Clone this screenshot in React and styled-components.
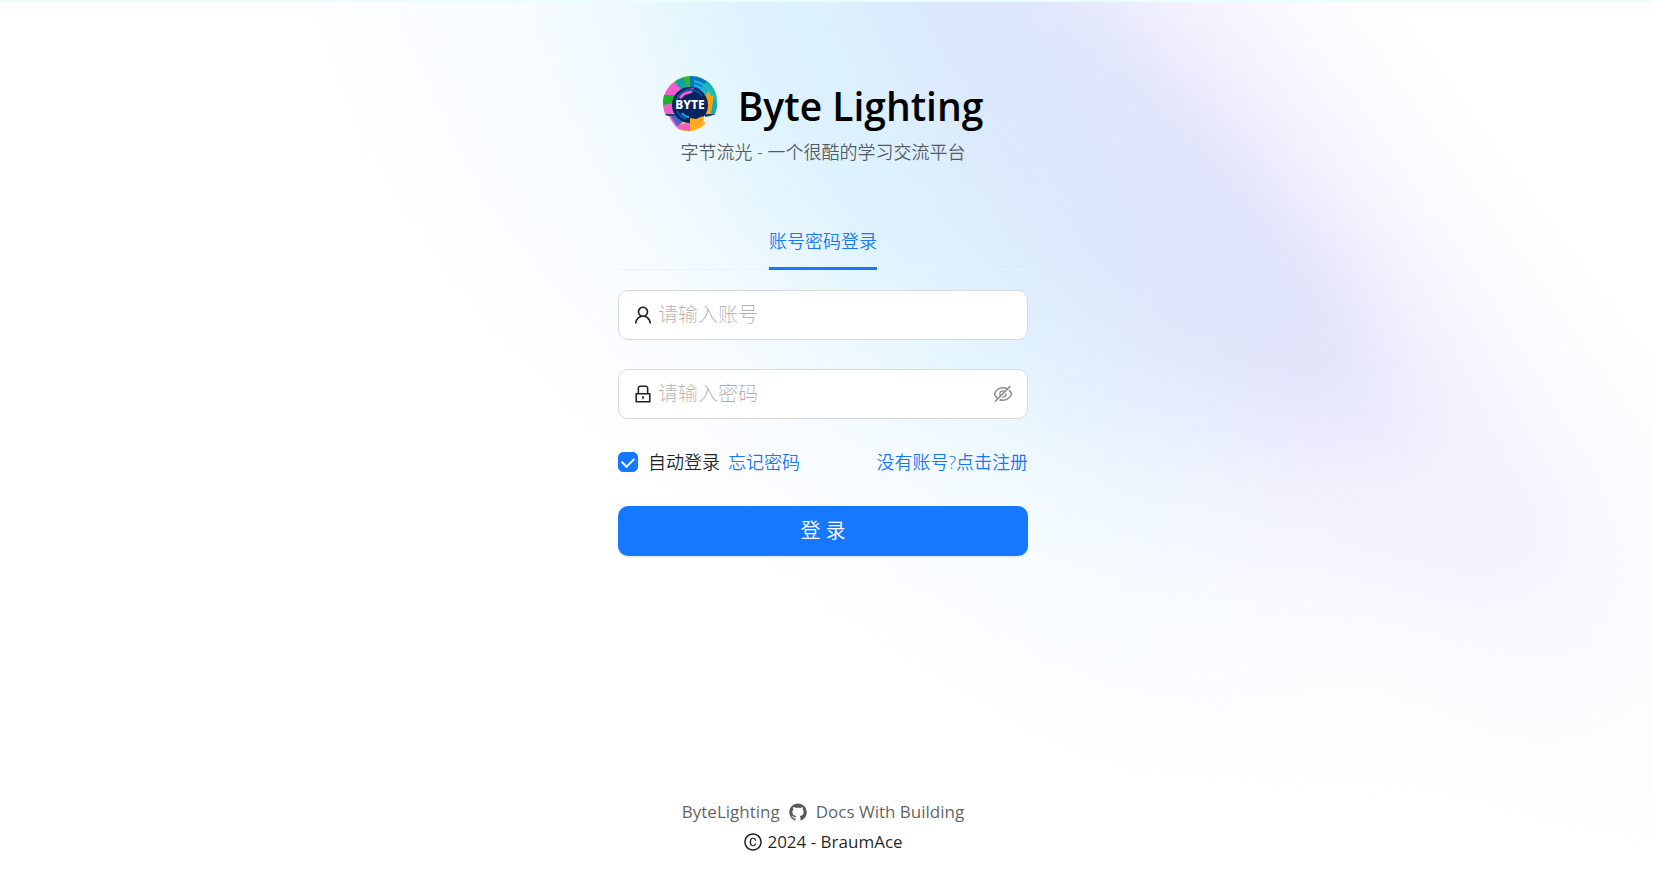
import { useState } from "react";
import styled, { createGlobalStyle } from "styled-components";
import {
  AiFillGithub,
  AiOutlineCopyright,
  AiOutlineEye,
  AiOutlineEyeInvisible,
  AiOutlineLock,
  AiOutlineUser,
} from "react-icons/ai";

const App = () => {
  const [account, setAccount] = useState("");
  const [password, setPassword] = useState("");
  const [visible, setVisible] = useState(false);

  return (
    <>
      <GlobalStyle />
      <Page>
        <Backdrop />
        <Content>
          <Header>
            <Brand>
              <Logo />
              <Title>Byte Lighting</Title>
            </Brand>
            <Desc>字节流光 - 一个很酷的学习交流平台</Desc>
          </Header>

          <Form onSubmit={(e) => e.preventDefault()}>
            <Tabs role="tablist">
              <Tab type="button" role="tab" aria-selected="true">
                账号密码登录
              </Tab>
            </Tabs>

            <Field>
              <AiOutlineUser />
              <input
                type="text"
                name="account"
                aria-label="账号"
                placeholder="请输入账号"
                value={account}
                onChange={(e) => setAccount(e.target.value)}
              />
            </Field>

            <Field>
              <AiOutlineLock />
              <input
                type={visible ? "text" : "password"}
                name="password"
                aria-label="密码"
                placeholder="请输入密码"
                value={password}
                onChange={(e) => setPassword(e.target.value)}
              />
              <EyeButton
                type="button"
                aria-label="显示密码"
                onClick={() => setVisible(!visible)}
              >
                {visible ? <AiOutlineEye /> : <AiOutlineEyeInvisible />}
              </EyeButton>
            </Field>

            <Options>
              <Remember htmlFor="autoLogin">
                <input type="checkbox" id="autoLogin" defaultChecked />
                自动登录
              </Remember>
              <TextLink href="#forget">忘记密码</TextLink>
              <TextLink href="#register" $right>
                没有账号?点击注册
              </TextLink>
            </Options>

            <Submit type="submit">登 录</Submit>
          </Form>
        </Content>

        <Footer>
          <FooterLinks>
            <a href="#home">ByteLighting</a>
            <a href="#github" aria-label="GitHub">
              <AiFillGithub />
            </a>
            <a href="#docs">Docs With Building</a>
          </FooterLinks>
          <Copyright>
            <AiOutlineCopyright />
            2024 - BraumAce
          </Copyright>
        </Footer>
      </Page>
    </>
  );
};

// nested glow layers, from the palest outer one to the core
const GLOW = [
  {
    from: "#fcfdff",
    to: "#fdfdff",
    d: "M240 -200L330 0C390 180 450 260 560 370S780 550 900 630S1090 750 1189 757S1400 750 1527 795S1700 800 1760 800V560L1653 392L1542 241L1372 0L1250 -200Z",
  },
  {
    from: "#f7fcff",
    to: "#faf9fe",
    d: "M350 -200L430 0C470 120 510 190 600 290S800 470 900 540S1090 660 1189 665S1320 630 1400 655S1500 706 1550 706S1660 640 1662 570S1600 420 1546 336L1427 168L1308 0L1190 -200Z",
  },
  {
    from: "#eff9ff",
    to: "#f3f2fe",
    d: "M490 -200L560 0C590 110 640 200 720 290S880 430 960 480S1110 550 1189 556S1310 550 1370 570S1500 610 1540 580S1570 520 1542 476S1490 370 1459 314L1348 146L1237 0L1110 -200Z",
  },
  {
    from: "#e4f6fe",
    to: "#eaeafd",
    d: "M600 -200L655 0C680 110 720 180 780 250S900 360 1000 410S1150 460 1230 460S1340 460 1380 458S1430 430 1419 404S1400 340 1368 280L1268 146L1129 0L1010 -200Z",
  },
  {
    from: "#dcf1fe",
    to: "#e3e4fb",
    d: "M670 -200L725 0C750 90 780 140 830 200S960 310 1030 345S1130 375 1200 385S1330 410 1350 385S1350 320 1320 270L1230 150L1085 0L960 -200Z",
  },
  {
    from: "#daebfd",
    to: "#dfe5fc",
    d: "M800 -200L860 0C890 70 930 130 980 180S1060 260 1120 290S1240 330 1280 335S1300 290 1270 255L1180 151L1035 0L910 -200Z",
  },
];

const Backdrop = () => (
  <BackdropSvg viewBox="0 0 1653 879" preserveAspectRatio="none" aria-hidden="true">
    <defs>
      <filter
        id="soft"
        filterUnits="userSpaceOnUse"
        x="0"
        y="-200"
        width="1800"
        height="1200"
        colorInterpolationFilters="sRGB"
      >
        <feGaussianBlur stdDeviation="26" />
      </filter>
      {GLOW.map((layer, ind) => (
        <linearGradient
          key={layer.d}
          id={`glow${ind}`}
          gradientUnits="userSpaceOnUse"
          x1="820"
          y1="0"
          x2="1070"
          y2="-112"
        >
          <stop offset="0" stopColor={layer.from} />
          <stop offset="1" stopColor={layer.to} />
        </linearGradient>
      ))}
    </defs>
    {GLOW.map((layer, ind) => (
      <path key={layer.d} d={layer.d} fill={`url(#glow${ind})`} filter="url(#soft)" />
    ))}
  </BackdropSvg>
);

const Logo = () => (
  <svg width="55" height="55" viewBox="0 0 55 55" role="img" aria-label="Byte">
    <path d="M27 0A27 27 0 0 1 47 8L38 17A16 16 0 0 0 27 11Z" fill="#0878b8" />
    <path d="M27 0A27 27 0 0 0 11 6L18 15L27 11Z" fill="#35b52b" />
    <path d="M13 5L20 2L24 10L17 15Z" fill="#0ba3a4" />
    <path d="M11 6A27 27 0 0 0 1 20L12 23L20 15Z" fill="#f35bd0" />
    <path d="M1 19A27 27 0 0 0 0 30L10 31L12 19Z" fill="#18b62c" />
    <path d="M0 29A27 27 0 0 0 3 40L13 36L11 27Z" fill="#ee60c8" />
    <path d="M44 5A27 27 0 0 1 54 23L43 27L36 15Z" fill="#13b5aa" />
    <path d="M49 13A27 27 0 0 1 54 32L44 32L42 19Z" fill="#17c99c" />
    <path d="M40 18L46 15A21 21 0 0 1 51 38L41 39Z" fill="#f6a40b" />
    <path d="M54 27A27 27 0 0 1 52 38L48 38L51 20Z" fill="#12a9c9" />
    <path d="M5 38L13 37L20 44L17 54A27 27 0 0 1 8 44Z" fill="#ed60cc" />
    <path d="M8 40L14 38L20 46L14 50Z" fill="#4565ce" />
    <path d="M17 48L28 44L38 44L43 47A24 24 0 0 1 17 54Z" fill="#ffae20" />
    <path d="M16 49L27 47L27 55L17 53Z" fill="#f75dc8" />
    <path d="M2 38H12L11 40L5 40Z" fill="#18407a" />
    <path d="M53 38H42L42 41L47 40Z" fill="#18407a" />
    <circle cx="27" cy="29" r="18" fill="#06245f" />
    <path d="M14 20L24 13L31 12L29 17L22 19L18 23Z" fill="#f35bd0" />
    <path
      d="M31 5A24 24 0 0 1 49 20M31 9A20 20 0 0 1 44 19"
      fill="none"
      stroke="#22b9e2"
      strokeWidth="2"
    />
    <path
      d="M14 24A14 14 0 0 1 39 20M14 35A15 15 0 0 0 23 43"
      fill="none"
      stroke="#0754a7"
      strokeWidth="2"
    />
    <path d="M19 37Q22 41 26 41" fill="none" stroke="#15a7e8" strokeWidth="2" />
    <path d="M27 42L33 43L40 40L41 44L33 49L27 47Z" fill="#ffa51b" />
    <text
      x="27"
      y="33"
      textAnchor="middle"
      fontFamily="Noto Sans, sans-serif"
      fontSize="12"
      fontWeight="800"
      fill="#ffffff"
    >
      BYTE
    </text>
  </svg>
);

const GlobalStyle = createGlobalStyle`
  * {
    box-sizing: border-box;
  }

  body {
    margin: 0;
    background: #ffffff;
    font-family: "Open Sans", "Noto Sans CJK SC", sans-serif;
    font-size: 17px;
    line-height: 28px;
    color: rgba(0, 0, 0, 0.88);
  }

  input,
  button {
    font-family: inherit;
  }

  a {
    text-decoration: none;
  }
`;

const Page = styled.div`
  position: relative;
  display: flex;
  flex-direction: column;
  min-height: 100vh;
  padding-right: 7px;
  overflow: hidden;
  border-top: 2px solid #eafffd;
`;

const BackdropSvg = styled.svg`
  position: absolute;
  inset: 0;
  z-index: -1;
  width: 100%;
  height: 100%;
`;

const Content = styled.main`
  flex: 1;
  display: flex;
  flex-direction: column;
  align-items: center;
  padding: 74px 24px 40px;
`;

const Header = styled.header`
  display: flex;
  flex-direction: column;
  align-items: center;
`;

const Brand = styled.div`
  display: flex;
  align-items: center;
  gap: 20px;
`;

const Title = styled.h1`
  margin: 0;
  padding-top: 4px;
  font-size: 39px;
  font-weight: 600;
  line-height: 51px;
  color: #000000;
`;

const Desc = styled.p`
  margin: 7px 0 0;
  font-size: 18px;
  font-weight: 350;
  color: rgba(0, 0, 0, 0.65);
`;

const Form = styled.form`
  display: flex;
  flex-direction: column;
  width: 100%;
  max-width: 410px;
  margin-top: 47px;
`;

const Tabs = styled.div`
  display: flex;
  justify-content: center;
  margin-bottom: 20px;
  border-bottom: 1px solid #f0f0f0;
`;

const Tab = styled.button`
  margin-bottom: -1px;
  padding: 14px 0 12px;
  border: none;
  border-bottom: 3px solid #1677ff;
  background: none;
  font-size: 18px;
  font-weight: 350;
  line-height: 28px;
  color: #1677ff;
  cursor: pointer;
`;

const Field = styled.div`
  display: flex;
  align-items: center;
  gap: 4px;
  height: 50px;
  margin-bottom: 29px;
  padding: 0 13px;
  border: 1px solid #d9d9d9;
  border-radius: 10px;
  background: #ffffff;

  svg {
    flex: none;
    width: 22px;
    height: 22px;
  }

  input {
    flex: 1;
    min-width: 0;
    padding: 0;
    border: none;
    outline: none;
    background: transparent;
    font-size: 20px;
    font-weight: 300;
    line-height: 30px;

    &::placeholder {
      color: rgba(0, 0, 0, 0.32);
    }
  }
`;

const EyeButton = styled.button`
  display: flex;
  padding: 0;
  border: none;
  background: none;
  color: rgba(0, 0, 0, 0.45);
  cursor: pointer;
`;

const Options = styled.div`
  display: flex;
  align-items: center;
  margin-bottom: 30px;
  font-size: 18px;
  font-weight: 350;
`;

const Remember = styled.label`
  display: flex;
  align-items: center;
  gap: 10px;
  margin-right: 8px;

  input {
    appearance: none;
    display: grid;
    place-items: center;
    width: 20px;
    height: 20px;
    margin: 0;
    border: 1px solid #d9d9d9;
    border-radius: 5px;
    background: #ffffff;
  }

  input:checked {
    border-color: #1677ff;
    background: #1677ff;
  }

  input:checked::after {
    content: "";
    width: 6px;
    height: 10px;
    margin-bottom: 3px;
    border: solid #ffffff;
    border-width: 0 2px 2px 0;
    transform: rotate(45deg);
  }
`;

const TextLink = styled.a`
  margin-left: ${({ $right }) => ($right ? "auto" : "0")};
  color: #1677ff;
`;

const Submit = styled.button`
  height: 50px;
  border: none;
  border-radius: 10px;
  background: #1677ff;
  box-shadow: 0 2px 0 rgba(5, 145, 255, 0.1);
  font-size: 20px;
  font-weight: 350;
  line-height: 30px;
  color: #ffffff;
  cursor: pointer;
`;

const Footer = styled.footer`
  display: flex;
  flex-direction: column;
  align-items: center;
  gap: 2px;
  padding-bottom: 23px;
`;

const FooterLinks = styled.nav`
  display: flex;
  align-items: center;
  gap: 8px;

  a {
    display: flex;
    color: rgba(0, 0, 0, 0.65);
  }

  svg {
    width: 20px;
    height: 20px;
  }
`;

const Copyright = styled.div`
  display: flex;
  align-items: center;
  gap: 4px;

  svg {
    width: 20px;
    height: 20px;
  }
`;

export default App;
